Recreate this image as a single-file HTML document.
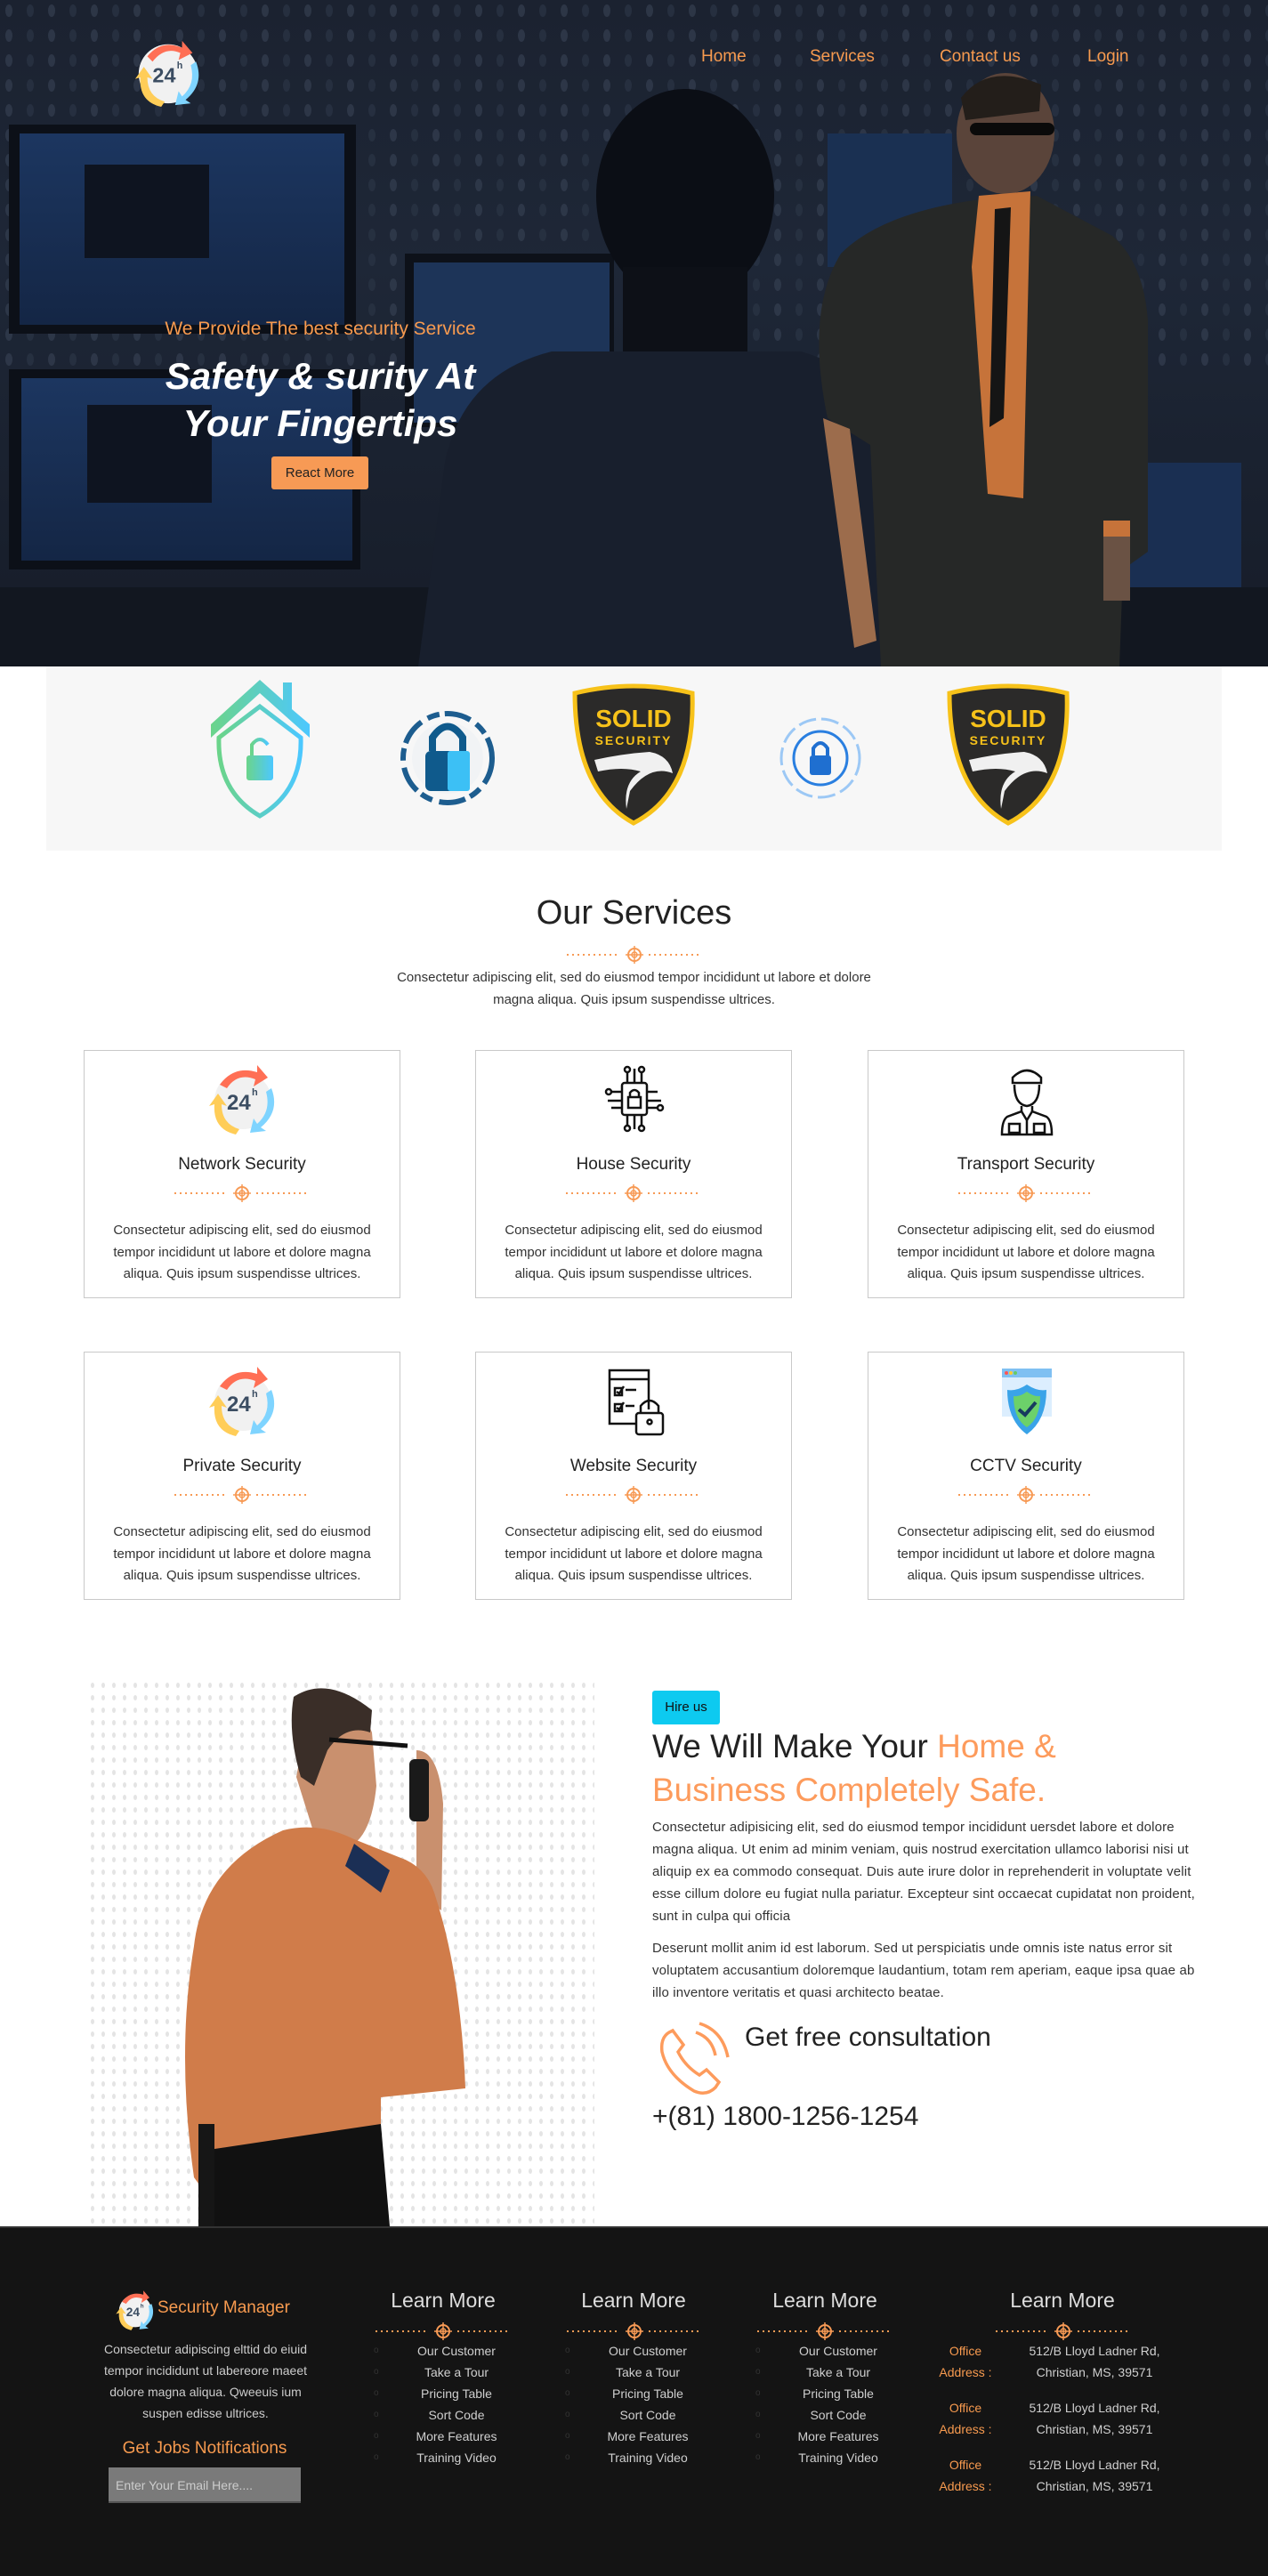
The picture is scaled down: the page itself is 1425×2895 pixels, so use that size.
<!DOCTYPE html>
<html><head><meta charset="utf-8">
<style>
*{margin:0;padding:0;box-sizing:border-box}
body{width:1425px;height:2895px;position:relative;background:#fff;font-family:"Liberation Sans",Arial,sans-serif;color:#222;overflow:hidden}
.a{position:absolute}
.hero{left:0;top:0;width:1425px;height:749px;background:linear-gradient(180deg,#1b2230 0%,#1e2737 40%,#161c28 100%);overflow:hidden}
.nav{color:#f79a4f;font-size:19px;top:53px}
.card{position:absolute;width:356px;height:279px;border:1.5px solid #c9c9c9;background:#fff;text-align:center}
.card h3{position:absolute;top:117px;left:0;width:100%;font-weight:400;font-size:19px;color:#222}
.card p{position:absolute;top:190px;left:20px;width:314px;font-size:15px;line-height:24.5px;color:#333}
.card .ic{position:absolute;left:136px;top:12px;width:84px;height:84px}
.card .dv{position:absolute;left:101px;top:150px}
.fh{color:#ddd;font-size:23px;top:2572px;text-align:center;width:200px}
.fl{color:#cfcfcf;font-size:14px;line-height:24px;text-align:center;width:160px;top:2630px}
.bul{color:#333;font-size:10px;line-height:24px;top:2630px}
</style></head><body>

<!-- HERO -->
<div class="a hero">
  <svg class="a" style="left:0;top:0" width="1425" height="749">
    <defs>
      <pattern id="dots" width="48" height="28" patternUnits="userSpaceOnUse">
        <ellipse cx="10" cy="12" rx="4" ry="7" fill="#343e50"/>
        <ellipse cx="34" cy="12" rx="4" ry="7" fill="#2a3445"/>
      </pattern>
      <linearGradient id="scr" x1="0" y1="0" x2="0" y2="1"><stop offset="0" stop-color="#1c3660"/><stop offset="1" stop-color="#142645"/></linearGradient>
    </defs>
    <rect x="0" y="0" width="1425" height="420" fill="url(#dots)" opacity=".7"/>
    <!-- monitors -->
    <rect x="10" y="140" width="390" height="235" fill="#0c1018"/>
    <rect x="22" y="150" width="365" height="215" fill="url(#scr)"/>
    <rect x="95" y="185" width="140" height="105" fill="#0e1420"/>
    <rect x="10" y="415" width="395" height="225" fill="#0c1018"/>
    <rect x="24" y="425" width="372" height="205" fill="url(#scr)"/>
    <rect x="98" y="455" width="140" height="110" fill="#0e1420"/>
    <rect x="455" y="285" width="235" height="195" fill="#0d1119"/>
    <rect x="465" y="295" width="220" height="180" fill="#1d3458"/>
    <rect x="930" y="150" width="140" height="150" fill="#1a3052"/>
    <rect x="1180" y="520" width="215" height="160" fill="#1a2f52"/>
    <rect x="0" y="660" width="1425" height="89" fill="#121720"/>
    <!-- silhouette man -->
    <ellipse cx="770" cy="220" rx="100" ry="120" fill="#0b0e15"/>
    <rect x="700" y="300" width="140" height="110" fill="#0d1017"/>
    <path d="M500 520 Q520 420 620 395 L900 395 Q990 420 1010 520 L1030 749 L470 749 Z" fill="#181f2d"/>
    <!-- suited man -->
    <ellipse cx="1130" cy="150" rx="55" ry="68" fill="#5a443a"/>
    <path d="M1080 110 Q1110 70 1170 95 L1168 125 L1085 135 Z" fill="#231e1a"/>
    <rect x="1090" y="138" width="95" height="14" rx="7" fill="#0a0a0a"/>
    <path d="M1095 225 L1165 220 L1250 265 Q1285 295 1290 360 L1290 620 L1262 640 L1258 749 L990 749 L978 500 L930 470 Q905 350 945 285 Q990 240 1095 225Z" fill="#262827"/>
    <path d="M1100 220 L1158 215 L1150 560 L1110 555 L1092 300 Z" fill="#c6733a"/>
    <path d="M1118 235 L1136 233 L1128 470 L1112 480 Z" fill="#151515"/>
    <path d="M925 470 L955 482 L985 720 L960 728 Z" fill="#9c6c4c"/>
    <rect x="1240" y="600" width="30" height="75" fill="#6a5244"/>
    <rect x="1240" y="585" width="30" height="18" fill="#c6733a"/>
  </svg>
  <!-- logo -->
  <svg class="a" style="left:148px;top:40px" width="82" height="82" viewBox="0 0 84 84">
    <circle cx="42" cy="44" r="34" fill="#f1f1f1"/>
    <path d="M18 24 Q34 4 58 14 L58 6 L70 20 L54 28 L56 20 Q38 12 24 30 Z" fill="#ff6f55"/>
    <path d="M74 30 Q84 56 62 74 L68 78 L50 80 L54 64 L58 70 Q74 56 68 34 Z" fill="#7fd4ff"/>
    <path d="M34 82 Q8 76 10 48 L4 50 L14 36 L24 50 L18 48 Q18 70 38 76 Z" fill="#ffcd58"/>
    <text x="24" y="54" font-family="Liberation Sans" font-weight="700" font-size="24" fill="#3b4d62">24</text>
    <text x="52" y="38" font-family="Liberation Sans" font-weight="700" font-size="11" fill="#3b4d62">h</text>
  </svg>
  <div class="a nav" style="left:788px">Home</div>
  <div class="a nav" style="left:910px">Services</div>
  <div class="a nav" style="left:1056px">Contact us</div>
  <div class="a nav" style="left:1222px">Login</div>
  <div class="a" style="left:160px;top:358px;width:400px;text-align:center;color:#f79a4f;font-size:21px">We Provide The best security Service</div>
  <div class="a" style="left:140px;top:396px;width:440px;text-align:center;color:#fff;font-size:42px;font-weight:700;font-style:italic;line-height:53px">Safety &amp; surity At<br>Your Fingertips</div>
  <div class="a" style="left:305px;top:513px;width:109px;height:37px;background:#f79a55;border-radius:3px;color:#222;font-size:15px;line-height:37px;text-align:center">React More</div>
</div>

<!-- LOGO STRIP -->
<div class="a" style="left:52px;top:749px;width:1321px;height:207px;background:#f7f7f7"></div>
<svg class="a" style="left:0;top:749px" width="1425" height="207">
  <defs>
    <linearGradient id="hg" x1="0" x2="1"><stop offset="0" stop-color="#6bd48a"/><stop offset="1" stop-color="#4cc8ff"/></linearGradient>
  </defs>
  <path d="M237 65 L292 15 L318 38 L318 18 L328 18 L328 48 L348 65 L348 80 L292 30 L237 80Z" fill="url(#hg)"/>
  <path d="M246 80 L292 45 L338 80 Q340 140 292 168 Q244 140 246 80Z" fill="none" stroke="url(#hg)" stroke-width="5"/>
  <rect x="277" y="100" width="30" height="28" rx="3" fill="url(#hg)"/>
  <path d="M283 100 V88 Q292 76 301 88" fill="none" stroke="url(#hg)" stroke-width="4"/>
  <circle cx="503" cy="103" r="50" fill="none" stroke="#1d5d8f" stroke-width="6" stroke-dasharray="30 8 14 6"/>
  <circle cx="503" cy="103" r="40" fill="#f1f3f5"/>
  <rect x="478" y="95" width="50" height="45" rx="6" fill="#0f5a8c"/>
  <rect x="503" y="95" width="25" height="45" rx="3" fill="#3cc0f5"/>
  <path d="M486 95 V80 Q503 55 520 80 V95" fill="none" stroke="#0f5a8c" stroke-width="8"/>
  <g id="sh">
    <path d="M646 30 Q712 14 778 30 Q782 140 712 176 Q646 140 646 30Z" fill="#2b2a29" stroke="#f7c21a" stroke-width="5"/>
    <text x="712" y="68" text-anchor="middle" font-family="Liberation Sans" font-weight="700" font-size="28" fill="#f7c21a">SOLID</text>
    <text x="712" y="88" text-anchor="middle" font-family="Liberation Sans" font-weight="700" font-size="14" fill="#f7c21a" letter-spacing="2">SECURITY</text>
    <path d="M668 105 Q700 98 730 96 Q752 100 756 120 Q730 110 708 140 L704 160 Q700 130 720 118 Q700 112 672 118Z" fill="#f0f0f0"/>
  </g>
  <use href="#sh" x="421"/>
  <circle cx="922" cy="103" r="44" fill="none" stroke="#9cc8f5" stroke-width="3" stroke-dasharray="20 6"/>
  <circle cx="922" cy="103" r="30" fill="none" stroke="#2a7fe0" stroke-width="3"/>
  <rect x="910" y="100" width="24" height="22" rx="3" fill="#1f6fd0"/>
  <path d="M914 100 V92 Q922 80 930 92 V100" fill="none" stroke="#1f6fd0" stroke-width="4"/>
</svg>

<!-- OUR SERVICES -->
<div class="a" style="left:0;top:1005px;width:1425px;text-align:center;font-size:38px;color:#222">Our Services</div>
<svg class="a" style="left:637px;top:1063px" width="152" height="20"><g id="dvg">
  <line x1="0" y1="10" x2="60" y2="10" stroke="#f79a55" stroke-width="2" stroke-dasharray="2 4"/>
  <line x1="92" y1="10" x2="152" y2="10" stroke="#f79a55" stroke-width="2" stroke-dasharray="2 4"/>
  <circle cx="76" cy="10" r="7" fill="none" stroke="#f79a55" stroke-width="2"/>
  <circle cx="76" cy="10" r="3" fill="none" stroke="#f79a55" stroke-width="1.5"/>
  <path d="M76 0 V20 M66 10 H86" stroke="#f79a55" stroke-width="1.5"/></g>
</svg>
<div class="a" style="left:0;top:1087px;width:1425px;text-align:center;font-size:15px;line-height:24.5px;color:#333">Consectetur adipiscing elit, sed do eiusmod tempor incididunt ut labore et dolore<br>magna aliqua. Quis ipsum suspendisse ultrices.</div>

<svg width="0" height="0" style="position:absolute">
  <defs>
    <g id="i24">
      <circle cx="42" cy="44" r="32" fill="#f1f1f1"/>
      <path d="M16 26 Q32 4 58 12 L58 4 L70 18 L54 28 L56 20 Q36 12 24 30 Z" fill="#ff6f55"/>
      <path d="M74 30 Q84 56 62 74 L68 78 L50 80 L54 64 L58 70 Q74 56 68 34 Z" fill="#7fd4ff"/>
      <path d="M34 82 Q8 76 10 48 L4 50 L14 36 L24 50 L18 48 Q18 70 38 76 Z" fill="#ffcd58"/>
      <text x="24" y="54" font-family="Liberation Sans" font-weight="700" font-size="24" fill="#3b4d62">24</text>
      <text x="52" y="38" font-family="Liberation Sans" font-weight="700" font-size="11" fill="#3b4d62">h</text>
    </g>
  </defs>
</svg>

<div class="card" style="left:94px;top:1180px">
  <svg class="ic" viewBox="0 0 84 84"><use href="#i24"/></svg>
  <h3>Network Security</h3>
  <svg class="dv" width="152" height="20"><use href="#dvg"/></svg>
  <p>Consectetur adipiscing elit, sed do eiusmod tempor incididunt ut labore et dolore magna aliqua. Quis ipsum suspendisse ultrices.</p>
</div>
<div class="card" style="left:534px;top:1180px">
  <svg class="ic" viewBox="0 0 84 84" fill="none" stroke="#111" stroke-width="2.5">
    <rect x="28" y="24" width="28" height="36" rx="3"/><rect x="35" y="40" width="14" height="12"/><path d="M37 40 V35 Q42 29 47 35 V40"/>
    <path d="M34 24 V12 M42 24 V8 M50 24 V12 M34 60 V72 M42 60 V76 M50 60 V72 M28 34 H16 M28 44 H12 M28 52 H16 M56 34 H68 M56 44 H72 M56 52 H68"/>
    <circle cx="34" cy="9" r="3"/><circle cx="50" cy="9" r="3"/><circle cx="13" cy="34" r="3"/><circle cx="71" cy="52" r="3"/><circle cx="34" cy="75" r="3"/><circle cx="50" cy="75" r="3"/>
  </svg>
  <h3>House Security</h3>
  <svg class="dv" width="152" height="20"><use href="#dvg"/></svg>
  <p>Consectetur adipiscing elit, sed do eiusmod tempor incididunt ut labore et dolore magna aliqua. Quis ipsum suspendisse ultrices.</p>
</div>
<div class="card" style="left:975px;top:1180px">
  <svg class="ic" viewBox="0 0 84 84" fill="none" stroke="#111" stroke-width="2.5">
    <path d="M26 18 Q42 2 58 18 L58 24 H26 Z"/><path d="M28 26 Q28 48 42 50 Q56 48 56 26"/>
    <path d="M36 50 V56 L20 62 Q14 66 14 82 H70 Q70 66 64 62 L48 56 V50"/>
    <path d="M36 56 L42 66 L48 56 M42 66 V82 M22 70 H34 V80 H22Z M50 70 H62 V80 H50Z"/>
  </svg>
  <h3>Transport Security</h3>
  <svg class="dv" width="152" height="20"><use href="#dvg"/></svg>
  <p>Consectetur adipiscing elit, sed do eiusmod tempor incididunt ut labore et dolore magna aliqua. Quis ipsum suspendisse ultrices.</p>
</div>
<div class="card" style="left:94px;top:1519px">
  <svg class="ic" viewBox="0 0 84 84"><use href="#i24"/></svg>
  <h3>Private Security</h3>
  <svg class="dv" width="152" height="20"><use href="#dvg"/></svg>
  <p>Consectetur adipiscing elit, sed do eiusmod tempor incididunt ut labore et dolore magna aliqua. Quis ipsum suspendisse ultrices.</p>
</div>
<div class="card" style="left:534px;top:1519px">
  <svg class="ic" viewBox="0 0 84 84" fill="none" stroke="#111" stroke-width="2.5">
    <path d="M58 52 V8 H14 V68 H44"/><path d="M14 18 H58"/><path d="M20 28 H28 V36 H20Z M20 46 H28 V54 H20Z M32 30 H44 M32 48 H42 M22 32 L25 34 L30 26 M22 50 L25 52 L30 44"/>
    <rect x="44" y="56" width="30" height="24" rx="3"/><path d="M49 56 V48 Q59 36 69 48 V56"/><circle cx="59" cy="66" r="2.5"/>
  </svg>
  <h3>Website Security</h3>
  <svg class="dv" width="152" height="20"><use href="#dvg"/></svg>
  <p>Consectetur adipiscing elit, sed do eiusmod tempor incididunt ut labore et dolore magna aliqua. Quis ipsum suspendisse ultrices.</p>
</div>
<div class="card" style="left:975px;top:1519px">
  <svg class="ic" viewBox="0 0 84 84">
    <rect x="14" y="6" width="56" height="54" fill="#dceefe"/><rect x="14" y="6" width="56" height="10" fill="#7fc0f2"/>
    <circle cx="19" cy="11" r="2" fill="#f55"/><circle cx="24" cy="11" r="2" fill="#fc3"/><circle cx="29" cy="11" r="2" fill="#6c6"/>
    <path d="M42 24 Q54 32 64 30 Q64 64 42 80 Q20 64 20 30 Q30 32 42 24Z" fill="#3aa3e8"/>
    <path d="M42 32 Q50 38 57 37 Q57 62 42 72 Q27 62 27 37 Q34 38 42 32Z" fill="#6cd16a"/>
    <path d="M33 52 L40 58 L52 44" fill="none" stroke="#173a5e" stroke-width="4"/>
  </svg>
  <h3>CCTV Security</h3>
  <svg class="dv" width="152" height="20"><use href="#dvg"/></svg>
  <p>Consectetur adipiscing elit, sed do eiusmod tempor incididunt ut labore et dolore magna aliqua. Quis ipsum suspendisse ultrices.</p>
</div>

<!-- HIRE SECTION -->
<svg class="a" style="left:98px;top:1887px" width="570" height="615">
  <defs><pattern id="dp" width="12" height="14" patternUnits="userSpaceOnUse"><ellipse cx="6" cy="7" rx="2" ry="3" fill="#e4e4e4"/></pattern></defs>
  <rect width="570" height="615" fill="url(#dp)"/>
  <path d="M250 30 Q300 10 320 60 L325 120 Q320 170 300 185 L260 190 L235 110 Z" fill="#c9906e"/>
  <path d="M232 20 Q270 -5 320 35 L318 60 Q290 50 270 80 L255 120 L240 110 Q225 60 232 20Z" fill="#3a2e28"/>
  <path d="M272 68 L360 75" stroke="#111" stroke-width="5"/>
  <path d="M370 80 Q395 80 400 140 L398 260 L370 240 Z" fill="#c9906e"/>
  <rect x="362" y="90" width="22" height="70" rx="6" fill="#1a1a1a"/>
  <path d="M220 170 Q260 160 300 180 L350 200 Q380 210 390 240 Q420 330 425 460 L330 470 L330 600 L160 615 L120 560 Q100 420 120 300 Q130 210 220 170Z" fill="#d07c4a"/>
  <path d="M300 185 L340 215 L330 240 L290 210Z" fill="#1b2f55"/>
  <path d="M130 530 L330 500 L340 615 L125 615Z" fill="#111"/>
  <rect x="125" y="500" width="18" height="115" fill="#161616"/>
</svg>
<div class="a" style="left:733px;top:1900px;width:76px;height:38px;background:#0dcaf0;border-radius:3px;font-size:15px;line-height:38px;text-align:center;color:#111">Hire us</div>
<div class="a" style="left:733px;top:1938px;width:640px;font-size:37px;line-height:49px;color:#222">We Will Make Your <span style="color:#fd9b5c">Home &amp;<br>Business Completely Safe.</span></div>
<div class="a" style="left:733px;top:2041px;width:618px;font-size:15px;letter-spacing:0.15px;line-height:25px;color:#333">Consectetur adipisicing elit, sed do eiusmod tempor incididunt uersdet labore et dolore magna aliqua. Ut enim ad minim veniam, quis nostrud exercitation ullamco laborisi nisi ut aliquip ex ea commodo consequat. Duis aute irure dolor in reprehenderit in voluptate velit esse cillum dolore eu fugiat nulla pariatur. Excepteur sint occaecat cupidatat non proident, sunt in culpa qui officia</div>
<div class="a" style="left:733px;top:2177px;width:618px;font-size:15px;letter-spacing:0.15px;line-height:25px;color:#333">Deserunt mollit anim id est laborum. Sed ut perspiciatis unde omnis iste natus error sit voluptatem accusantium doloremque laudantium, totam rem aperiam, eaque ipsa quae ab illo inventore veritatis et quasi architecto beatae.</div>
<svg class="a" style="left:738px;top:2270px" width="86" height="86" viewBox="0 0 86 86" fill="none" stroke="#fd9b5c" stroke-width="3.5">
  <path d="M14 14 Q4 20 6 36 Q12 62 42 80 Q56 86 66 76 L70 70 L56 56 L48 62 Q32 52 24 36 L30 28 L18 12Z"/>
  <path d="M44 14 Q62 20 66 40 M48 4 Q74 12 80 42"/>
</svg>
<div class="a" style="left:837px;top:2273px;font-size:30px;color:#222">Get free consultation</div>
<div class="a" style="left:733px;top:2362px;font-size:30px;color:#222">+(81) 1800-1256-1254</div>

<!-- FOOTER -->
<div class="a" style="left:0;top:2502px;width:1425px;height:393px;background:#141414;border-top:2px solid #333"></div>
<svg class="a" style="left:128px;top:2572px" width="48" height="48" viewBox="0 0 84 84"><use href="#i24"/></svg>
<div class="a" style="left:177px;top:2583px;color:#f79a4f;font-size:19px">Security Manager</div>
<div class="a" style="left:100px;top:2628px;width:262px;text-align:center;color:#ccc;font-size:14px;line-height:24px">Consectetur adipiscing elttid do eiuid tempor incididunt ut labereore maeet dolore magna aliqua. Qweeuis ium suspen edisse ultrices.</div>
<div class="a" style="left:90px;top:2741px;width:280px;text-align:center;color:#f79a4f;font-size:19px">Get Jobs Notifications</div>
<div class="a" style="left:122px;top:2773px;width:216px;height:40px;background:#7a7a7a;border-bottom:2px solid #555;color:#ccc;font-size:14px;line-height:40px;padding-left:8px">Enter Your Email Here....</div>

<div class="a fh" style="left:398px">Learn More</div>
<div class="a fh" style="left:612px">Learn More</div>
<div class="a fh" style="left:827px">Learn More</div>
<div class="a fh" style="left:1094px">Learn More</div>
<svg class="a" style="left:422px;top:2610px" width="152" height="20"><use href="#dvg"/></svg>
<svg class="a" style="left:637px;top:2610px" width="152" height="20"><use href="#dvg"/></svg>
<svg class="a" style="left:851px;top:2610px" width="152" height="20"><use href="#dvg"/></svg>
<svg class="a" style="left:1119px;top:2610px" width="152" height="20"><use href="#dvg"/></svg>

<div class="a bul" style="left:420px">o<br>o<br>o<br>o<br>o<br>o</div>
<div class="a bul" style="left:635px">o<br>o<br>o<br>o<br>o<br>o</div>
<div class="a bul" style="left:849px">o<br>o<br>o<br>o<br>o<br>o</div>
<div class="a fl" style="left:433px">Our Customer<br>Take a Tour<br>Pricing Table<br>Sort Code<br>More Features<br>Training Video</div>
<div class="a fl" style="left:648px">Our Customer<br>Take a Tour<br>Pricing Table<br>Sort Code<br>More Features<br>Training Video</div>
<div class="a fl" style="left:862px">Our Customer<br>Take a Tour<br>Pricing Table<br>Sort Code<br>More Features<br>Training Video</div>

<div class="a" style="left:1040px;top:2630px;width:90px;text-align:center;color:#f79a4f;font-size:14px;line-height:24px">Office<br>Address :</div>
<div class="a" style="left:1140px;top:2630px;width:180px;text-align:center;color:#cfcfcf;font-size:14px;line-height:24px">512/B Lloyd Ladner Rd,<br>Christian, MS, 39571</div>
<div class="a" style="left:1040px;top:2694px;width:90px;text-align:center;color:#f79a4f;font-size:14px;line-height:24px">Office<br>Address :</div>
<div class="a" style="left:1140px;top:2694px;width:180px;text-align:center;color:#cfcfcf;font-size:14px;line-height:24px">512/B Lloyd Ladner Rd,<br>Christian, MS, 39571</div>
<div class="a" style="left:1040px;top:2758px;width:90px;text-align:center;color:#f79a4f;font-size:14px;line-height:24px">Office<br>Address :</div>
<div class="a" style="left:1140px;top:2758px;width:180px;text-align:center;color:#cfcfcf;font-size:14px;line-height:24px">512/B Lloyd Ladner Rd,<br>Christian, MS, 39571</div>
</body></html>
